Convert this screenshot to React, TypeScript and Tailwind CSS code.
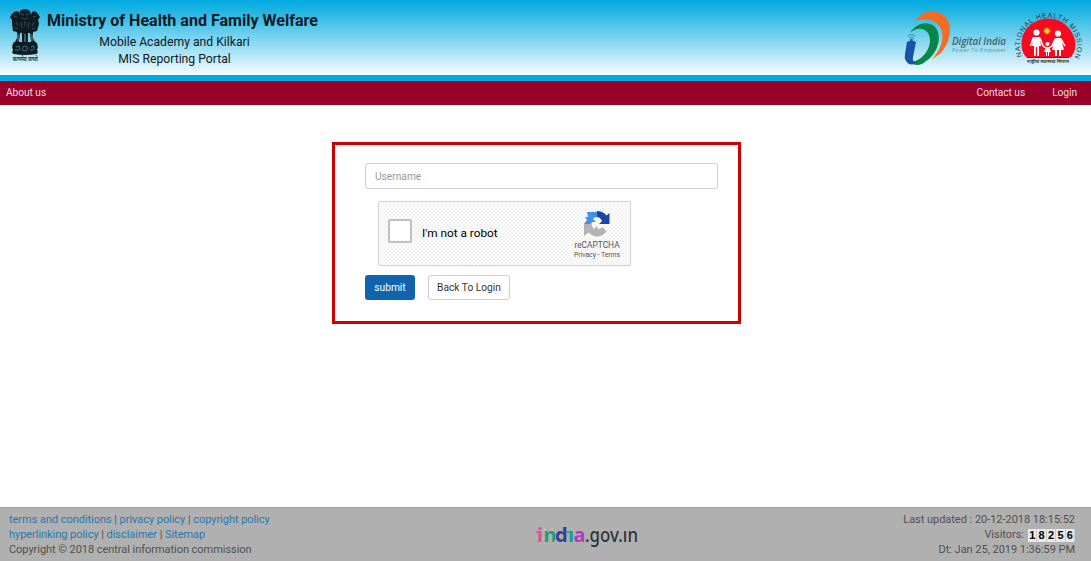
import React from 'react';

function Emblem() {
  return (
    <svg width="32" height="56" viewBox="0 0 32 56" className="block shrink-0">
      <g fill="#101c22">
        <path d="M11 3 Q16 -1 21 3 L22 7 L23 4 Q27 2 29 6 L31 9 L29 12 L30 16 L28 23 L24 24 L24 30 L26 34 L22 34 L21 25 L19 25 L19 34 L13 34 L13 25 L11 25 L10 34 L6 34 L8 30 L8 24 L4 23 L3 16 L3 12 L1 9 L3 6 Q6 2 10 4 L10 7Z" />
        <path d="M5 34 H27 Q30 38 28 42 Q30 45 27 46 Q16 48 5 46 Q2 45 4 42 Q2 38 5 34Z" />
      </g>
      <g fill="none" stroke="#52a9c5" strokeWidth="0.7">
        <path d="M12 6 L15 7 M17 7 L20 6 M13 10 Q16 12 19 10 M5 8 L8 9 M24 9 L27 8 M7 14 L9 18 M25 14 L23 18 M12 14 L13 20 M20 14 L19 20 M16 13 V18 M6 20 L9 21 M26 20 L23 21" opacity="0.5" />
        <path d="M9 26 V33 M11.5 27 V34 M20.5 27 V34 M23 26 V33 M16 26 V34" stroke="#92cadd" />
        <g opacity="0.85"><circle cx="16" cy="40.5" r="2.5" /><path d="M7 39 L10 38 L11 42 M6 42 H10 M22 39 L25 38 L25 42 M21 42 H24" /></g>
      </g>
      <text x="16.2" y="53" textAnchor="middle" textLength="25" lengthAdjust="spacingAndGlyphs" fontSize="5.5" fontWeight="700" fill="#26383f" fontFamily="Noto Sans, sans-serif">सत्यमेव जयते</text>
    </svg>
  );
}

function DigitalIndia() {
  return (
    <svg width="105" height="58" viewBox="0 0 105 58" className="block shrink-0">
      <path d="M11 10 C18 0 29 -2 38 3 C51 10 48 39 28 48 C35 41 40 31 38 21 C36 11 26 5 11 10Z" fill="#f46b24" />
      <path d="M6 22 C12 12 23 10 30 15 C40 24 33 44 22 50 C17 55 10 55 7 51 C14 50 20 46 24 38 C28 29 26 20 18 18 C14 17 9 19 6 22Z" fill="#078747" />
      <path d="M3 31 Q7 28 12 31 L9 46 Q8 50 12 52 Q6 56 2 50 Q0 47 1 43Z" fill="#1554a7" />
      <circle cx="7.5" cy="29" r="1.3" fill="#1554a7" />
      <path d="M5 27.3 Q7.5 25.3 10 27.3 M3.8 25.3 Q7.5 22.2 11.2 25.3" fill="none" stroke="#327eb7" strokeWidth="1" />
      <text x="48" y="34" textLength="54" fontSize="9.8" fontStyle="italic" fontWeight="600" fill="#455e69" fontFamily="Open Sans, sans-serif">Digital India</text>
      <text x="48" y="41" textLength="54" fontSize="5.3" fill="#718f9b" fontFamily="Open Sans, sans-serif">Power To Empower</text>
    </svg>
  );
}

function HealthMission() {
  return (
    <svg width="68" height="54" viewBox="0 0 68 54" className="block shrink-0 overflow-visible">
      <defs><path id="missionArc" d="M7 44.5 A28.5 28.5 0 1 1 60 44.5" /></defs>
      <path d="M11 45 C4 38 5 22 14 14 C25 4 42 4 52 14 C62 24 63 37 56 45Z" fill="#f70920" />
      <text fontSize="7" fill="#273940" fontFamily="Liberation Sans, sans-serif">
        <textPath href="#missionArc" textLength="112" lengthAdjust="spacing">NATIONAL HEALTH MISSION</textPath>
      </text>
      <g stroke="#ffbd21" strokeWidth="0.7"><path d="M32 15 V23 M28 19 H36 M29 16 L35 22 M35 16 L29 22" /><circle cx="32" cy="19" r="2.3" fill="#ffdb35" /></g>
      <g fill="white" stroke="white">
        <circle cx="21.5" cy="20.5" r="3.1" stroke="none" /><path d="M18 25 H25 L26 34 H24 V44 H22.2 V35 H20.8 V44 H19 V34 H17Z" stroke="none" />
        <circle cx="43" cy="21.5" r="3.1" stroke="none" /><path d="M40 26 H46 L49 38 H46 V44 H44 V38 H42 V44 H40 V38 H37Z" stroke="none" />
        <circle cx="32.5" cy="32" r="2.1" stroke="none" /><path d="M31 35 H34 L36 40 H34 V44 H33 V40 H32 V44 H31 V40 H29Z" stroke="none" />
        <path d="M18 26 L15.5 34 M25 26 L28 34 L31 36 M40 27 L37 34 L34 36 M46 27 L50 34" fill="none" strokeWidth="1.5" />
      </g>
      <path d="M12 45.5 H54" stroke="#292a32" strokeWidth="1" />
      <text x="33" y="51" textAnchor="middle" textLength="42" lengthAdjust="spacingAndGlyphs" fontSize="5.4" fontWeight="600" fill="#293c45" fontFamily="Noto Sans, sans-serif">राष्ट्रीय स्वास्थ्य मिशन</text>
    </svg>
  );
}

function RecaptchaMark() {
  return (
    <svg width="26" height="27" viewBox="0 0 26 27" className="block">
      <path d="M0 13 L3 9 L1 6 L4 6 L3 1 H13 V6 Q10 6 9 8 L12 11 H8 L7 13Z" fill="#4390ed" />
      <path d="M13 0 Q19 0 22.5 4.5 L25.5 2 V13 H15 L18 10 Q16 6 13 6Z" fill="#1a47a2" />
      <path d="M0 13 H7.5 Q8 16 10 18 L13 15 L14 18 Q17 18 18.5 16 L22.5 20.5 Q14 30 4.5 21.5 L0 25Z" fill="#b3b3b3" />
    </svg>
  );
}

function IndiaPortal() {
  return (
    <svg width="106" height="32" viewBox="0 0 106 32" className="block overflow-visible">
      <g fontFamily="Noto Sans, sans-serif" fontSize="20">
        <text y="21" fontWeight="700" x="1 7.5 19 32 37.5"><tspan fill="#e54a93">i</tspan><tspan fill="#259e75">n</tspan><tspan fill="#2941a9">d</tspan><tspan fill="#149d99">ı</tspan><tspan fill="#b33bc4">a</tspan></text>
        <text x="49" y="21" textLength="53" lengthAdjust="spacingAndGlyphs" fontWeight="500" fill="#30343b">.gov.ın</text>
      </g>
      <path d="M0 11 H3" stroke="#e54a93" strokeWidth="1.6" />
      <path d="M31 11 H34" stroke="#149d99" strokeWidth="1.6" />
      <circle cx="24.5" cy="15.5" r="1.8" fill="#eda63c" />
      <g fill="#f4d447"><circle cx="9" cy="8" r=".8" /><circle cx="16" cy="8" r=".8" /><circle cx="7" cy="18" r=".7" /><circle cx="19" cy="20" r=".7" /><circle cx="29" cy="5" r=".6" /></g>
    </svg>
  );
}

const digits = ['1', '8', '2', '5', '6'];

export default function App() {
  return (
    <div className="flex h-[561px] w-[1091px] flex-col bg-white font-['Roboto',sans-serif] text-[11px] text-[#333]">
      <header className="flex h-[81px] shrink-0 justify-between border-b-[6px] border-[#00abe0] bg-[linear-gradient(#00a9e0_0%,#20b5e3_15%,#f8fcfe_100%)] pt-2">
        <div className="flex pl-[9px]">
          <Emblem />
          <div className="ml-[6px] flex w-[271px] flex-col whitespace-nowrap text-[#10191e]">
            <h1 className="mt-[3px] text-[16px] leading-[20px] font-bold tracking-[0.02px]">Ministry of Health and Family Welfare</h1>
            <p className="mt-[3px] w-[255px] text-center text-[12.2px] leading-[17px]">Mobile Academy and Kilkari</p>
            <p className="w-[255px] text-center text-[12.2px] leading-[17px]">MIS Reporting Portal</p>
          </div>
        </div>
        <div className="flex pr-[8px]">
          <div className="mt-[3px] mr-[6px]"><DigitalIndia /></div>
          <div className="mt-[4px]"><HealthMission /></div>
        </div>
      </header>
      <nav className="flex h-6 shrink-0 items-center bg-[#990029] pr-[14px] pl-[6px] text-[10.2px] tracking-[-0.05px] text-[#f0dce1]">
        <a>About us</a>
        <a className="ml-auto">Contact us</a>
        <a className="ml-[27px]">Login</a>
      </nav>
      <main className="flex-1 pt-[37px]">
        <section className="ml-[332px] h-[182px] w-[409px] border-[3px] border-[#cc0000] pt-[18px] pl-[30px]">
          <input placeholder="Username" className="block h-[26px] w-[353px] rounded-[3px] border border-[#ccc] px-[9px] text-[10.2px] outline-none placeholder:text-[#999]" />
          <div className="mt-[12px] ml-[13px] flex h-[65px] w-[253px] rounded-[2px] border border-[#d3d3d3] bg-[repeating-conic-gradient(#f2f2f2_0_25%,#fcfcfc_0_50%)] bg-[length:4px_4px] shadow-[0_0_1px_#ddd]">
            <div className="mt-[17px] ml-[9px] h-6 w-6 rounded-[2px] border-2 border-[#c1c1c1] bg-white" />
            <span className="mt-[23px] ml-[10px] text-[11.8px] leading-4 text-black">I'm not a robot</span>
            <div className="mt-[9px] mr-[9px] ml-auto flex w-[48px] flex-col items-center whitespace-nowrap text-[#555]">
              <RecaptchaMark />
              <span className="mt-[2px] text-[8.4px] leading-[11px]">reCAPTCHA</span>
              <span className="text-[6.8px] leading-[9px]">Privacy - Terms</span>
            </div>
          </div>
          <div className="mt-[9px] flex gap-[13px]">
            <button className="h-[25px] w-[50px] rounded-[3px] bg-[#1064ae] text-[10.2px] text-white">submit</button>
            <button className="h-[25px] w-[82px] rounded-[3px] border border-[#ccc] bg-white text-[10.2px] whitespace-nowrap">Back To Login</button>
          </div>
        </section>
      </main>
      <footer className="grid h-[54px] shrink-0 grid-cols-[527px_1fr_auto] border-t border-[#a2a2a2] bg-[#b0b0b0] pt-[4px] pr-[16px] pl-[9px] leading-[15px] text-[#515151]">
        <div className="tracking-[-0.045px] whitespace-nowrap">
          <p><a className="text-[#2878ae]">terms and conditions</a> | <a className="text-[#2878ae]">privacy policy</a> | <a className="text-[#2878ae]">copyright policy</a></p>
          <p><a className="text-[#2878ae]">hyperlinking policy</a> | <a className="text-[#2878ae]">disclaimer</a> | <a className="text-[#2878ae]">Sitemap</a></p>
          <p>Copyright © 2018 central information commission</p>
        </div>
        <div className="pt-[9px]"><IndiaPortal /></div>
        <div className="text-right tracking-[-0.03px] whitespace-nowrap">
          <p>Last updated : 20-12-2018 18:15:52</p>
          <p className="flex h-[15px] items-center justify-end">Visitors:
            <span className="mt-px ml-[4px] flex h-[13px] w-[47px] bg-[#e9e9e9]">
              {digits.map((digit, index) => <span key={index} className="flex flex-1 items-center justify-center border-r border-[#ccc] font-['Liberation_Sans',sans-serif] text-[11px] leading-[13px] font-bold text-black">{digit}</span>)}
            </span>
          </p>
          <p>Dt: Jan 25, 2019 1:36:59 PM</p>
        </div>
      </footer>
    </div>
  );
}
